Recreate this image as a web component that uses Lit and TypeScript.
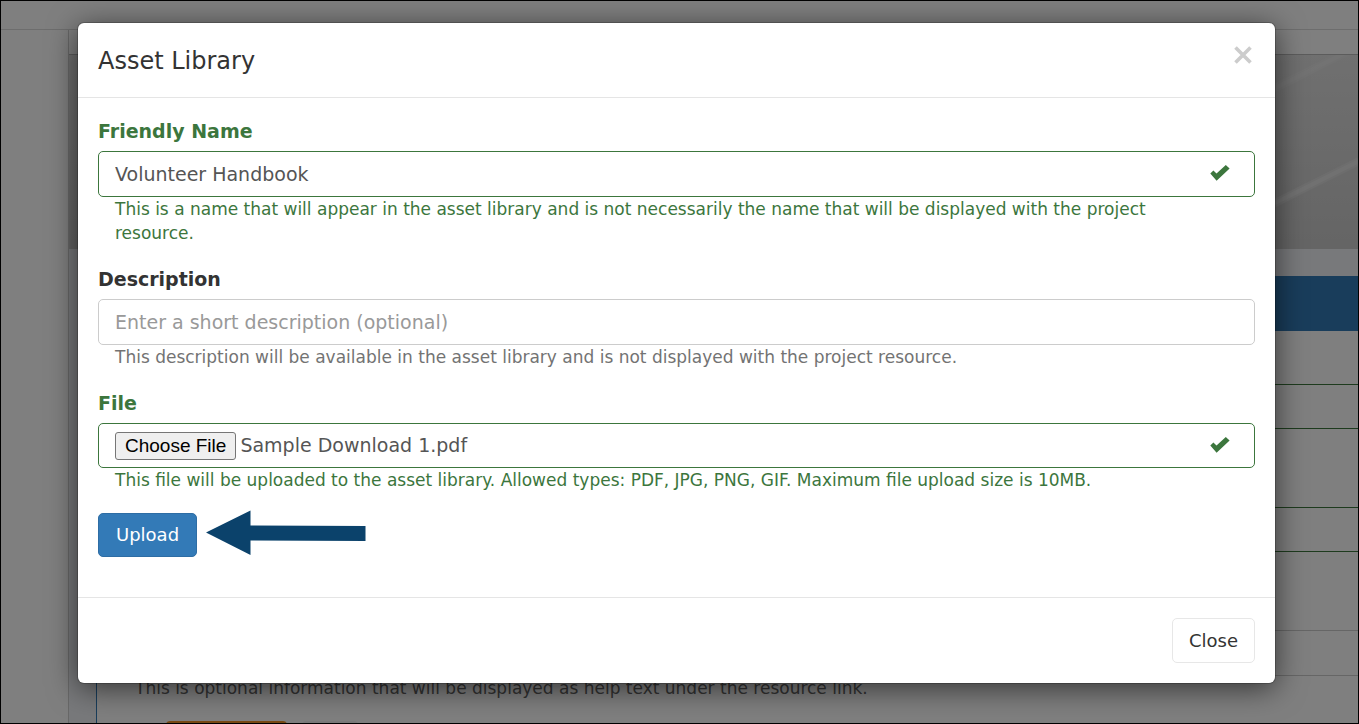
import { LitElement, html, css } from "lit";
import { customElement, query } from "lit/decorators.js";

const check = html`<svg class="check" viewBox="0 0 20 18" aria-hidden="true">
  <path d="M.3 8.600 3.400 5.500 6.500 8.500 15.800 0 19.600 3.600 6.600 15.800Z" fill="#3c763d" />
</svg>`;

@customElement("page-behind")
class PageBehind extends LitElement {
  static styles = css`
    :host {
      display: flex;
      flex-direction: column;
      height: 100%;
      overflow: hidden;
      background: #fff;
    }
    .topbar {
      flex: none;
      height: 28px;
      border-bottom: 1px solid #dadada;
    }
    .columns {
      flex: 1;
      display: flex;
      min-height: 0;
    }
    .side {
      flex: none;
      width: 67px;
      border-right: 1px solid #d0d0d0;
    }
    .main {
      flex: 1;
      min-width: 0;
      background: #f0f3f7;
    }
    .crumbs {
      height: 24px;
      background: #fff;
      border-bottom: 1px solid #b8b8b8;
    }
    .hero {
      display: block;
      width: 100%;
      height: 194px;
    }
    .card {
      margin: 27px 0 0 27px;
      border-left: 1px solid #337ab7;
      background: #fff;
    }
    .card-head {
      height: 55px;
      background: #337ab7;
    }
    .fields {
      display: grid;
      grid-template-rows: 45px 45px 46px;
      gap: 78px;
      padding: 53px 0 0 21px;
    }
    .box {
      box-sizing: border-box;
      border: 1px solid #3c763d;
      border-right: 0;
    }
    .plain {
      border-color: #ccc;
    }
    .hint {
      margin: 0 0 21px;
      padding-left: 38px;
      font-size: 17px;
      line-height: 24px;
      color: #666;
    }
    .actions {
      display: flex;
      gap: 15px;
      padding-left: 69px;
    }
    .orange,
    .pale {
      width: 121px;
      height: 44px;
      border-radius: 4px;
      background: #f0942a;
    }
    .pale {
      width: 56px;
      background: #f4f4f4;
    }
  `;

  render() {
    return html`
      <div class="topbar"></div>
      <div class="columns">
        <div class="side"></div>
        <div class="main">
          <div class="crumbs"></div>
          <svg class="hero" preserveAspectRatio="xMaxYMin slice" viewBox="0 0 1289 194">
            <defs>
              <linearGradient id="sky" x1="0" y1="0" x2="0" y2="1">
                <stop offset="0" stop-color="#e0e0e0" />
                <stop offset="1" stop-color="#cacaca" />
              </linearGradient>
            </defs>
            <rect width="1289" height="194" fill="url(#sky)" />
            <g stroke="#e8e8e8" fill="none">
              <path d="M1180 46 1290 -9M1180 161 1290 106" stroke-width="8" opacity=".4" />
              <path d="M1180 46 1290 -9M1180 161 1290 106" stroke-width="4" opacity=".6" />
            </g>
          </svg>
          <div class="card">
            <div class="card-head"></div>
            <div class="fields">
              <div class="box"></div>
              <div class="box"></div>
              <div class="box plain"></div>
            </div>
            <p class="hint">
              This is optional information that will be displayed as help text under the resource
              link.
            </p>
            <div class="actions">
              <div class="orange"></div>
              <div class="pale"></div>
            </div>
          </div>
        </div>
      </div>
    `;
  }
}

@customElement("app-root")
class AppRoot extends LitElement {
  static styles = css`
    :host {
      display: block;
      box-sizing: border-box;
      height: 100vh;
      border: 1px solid #000;
      overflow: hidden;
      position: relative;
      font-family: "DejaVu Sans", sans-serif;
      font-size: 19px;
      line-height: 26px;
      color: #333;
    }
    .backdrop {
      position: absolute;
      inset: 0;
      padding: 22px 83px 22px 77px;
      background: rgba(0, 0, 0, 0.5);
      overflow: hidden;
    }
    .dialog {
      background: #fff;
      border-radius: 6px;
      box-shadow: 0 0 0 1px rgba(0, 0, 0, 0.2), 0 5px 30px rgba(0, 0, 0, 0.6);
    }
    header {
      display: flex;
      justify-content: space-between;
      align-items: flex-start;
      padding: 20px;
      border-bottom: 1px solid #e5e5e5;
    }
    h1 {
      margin: 0;
      padding-top: 2px;
      font-size: 24px;
      line-height: 32px;
      font-weight: 400;
    }
    .x {
      display: block;
      margin: 0;
      padding: 3px;
      border: 0;
      background: none;
      cursor: pointer;
    }
    .x svg {
      display: block;
      width: 18px;
      height: 18px;
    }
    .body {
      padding: 20px 20px 40px;
    }
    .group {
      margin-bottom: 21px;
    }
    .group label {
      display: block;
      margin-bottom: 7px;
      font-weight: 700;
    }
    .field {
      display: grid;
      align-items: center;
    }
    .field > * {
      grid-area: 1 / 1;
    }
    .control {
      box-sizing: border-box;
      width: 100%;
      height: 46px;
      padding: 8px 16px;
      border: 1px solid #ccc;
      border-radius: 5px;
      background: #fff;
      color: #555;
      font: inherit;
      outline: none;
    }
    .control::placeholder {
      color: #999;
      opacity: 1;
    }
    .file {
      height: 45px;
    }
    .file::file-selector-button {
      box-sizing: border-box;
      height: 28px;
      margin: 0 4px 0 0;
      padding: 0 9px;
      border: 1px solid #767676;
      border-radius: 3px;
      background: #efefef;
      color: #000;
      font-family: "Liberation Sans", sans-serif;
      font-size: 19px;
      line-height: 24px;
    }
    .check {
      justify-self: end;
      width: 20px;
      height: 18px;
      margin-right: 25px;
      pointer-events: none;
    }
    .help {
      margin: 0;
      padding: 0 33px 0 17px;
      font-size: 17px;
      line-height: 24px;
      color: #737373;
    }
    .ok label,
    .ok .help {
      color: #3c763d;
    }
    .ok .control {
      border-color: #3c763d;
    }
    .submit {
      display: flex;
      align-items: flex-start;
      gap: 8px;
    }
    .btn {
      box-sizing: border-box;
      height: 44px;
      padding: 0 17px;
      border: 1px solid #2e6da4;
      border-radius: 5px;
      background: #337ab7;
      color: #fff;
      font: inherit;
      font-size: 18px;
      cursor: pointer;
    }
    .arrow {
      display: block;
      width: 162px;
      height: 46px;
      margin: -3px 0;
    }
    footer {
      display: flex;
      justify-content: flex-end;
      padding: 20px;
      border-top: 1px solid #e5e5e5;
    }
    footer .btn {
      height: 45px;
      padding: 0 16px;
      border-color: #e7e7e7;
      background: #fff;
      color: #333;
    }
  `;

  @query("#file") fileInput!: HTMLInputElement;

  firstUpdated() {
    const transfer = new DataTransfer();
    transfer.items.add(new File([""], "Sample Download 1.pdf", { type: "application/pdf" }));
    this.fileInput.files = transfer.files;
  }

  render() {
    return html`
      <page-behind></page-behind>
      <div class="backdrop">
        <div class="dialog" role="dialog" aria-labelledby="title">
          <header>
            <h1 id="title">Asset Library</h1>
            <button class="x" type="button" aria-label="Close">
              <svg viewBox="0 0 18 18">
                <path d="M1.5 1.5 16.5 16.5M16.5 1.5 1.5 16.5" stroke="#ccc" stroke-width="3.6" />
              </svg>
            </button>
          </header>
          <form class="body" @submit=${(e: Event) => e.preventDefault()}>
            <div class="group ok">
              <label for="name">Friendly Name</label>
              <div class="field">
                <input class="control" id="name" type="text" value="Volunteer Handbook" />
                ${check}
              </div>
              <p class="help">
                This is a name that will appear in the asset library and is not necessarily the name
                that will be displayed with the project resource.
              </p>
            </div>
            <div class="group">
              <label for="description">Description</label>
              <div class="field">
                <input
                  class="control"
                  id="description"
                  type="text"
                  placeholder="Enter a short description (optional)"
                />
              </div>
              <p class="help">
                This description will be available in the asset library and is not displayed with the
                project resource.
              </p>
            </div>
            <div class="group ok">
              <label for="file">File</label>
              <div class="field">
                <input class="control file" id="file" type="file" />
                ${check}
              </div>
              <p class="help">
                This file will be uploaded to the asset library. Allowed types: PDF, JPG, PNG, GIF.
                Maximum file upload size is 10MB.
              </p>
            </div>
            <div class="submit">
              <button class="btn" type="submit">Upload</button>
              <svg class="arrow" viewBox="0 0 162 46" aria-hidden="true">
                <path d="M1 22.5 45.5.5V15.500L160.500 16V31L45.500 30.500V45Z" fill="#0b426b" />
              </svg>
            </div>
          </form>
          <footer><button class="btn" type="button">Close</button></footer>
        </div>
      </div>
    `;
  }
}
